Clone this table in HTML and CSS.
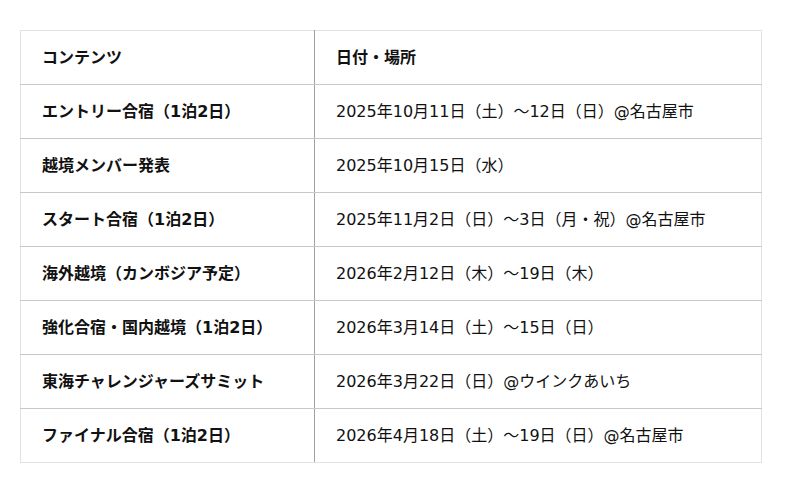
FILE: index.html
```html
<!DOCTYPE html>
<html lang="ja">
<head>
<meta charset="utf-8">
<link rel="stylesheet" href="styles.css">
</head>
<body>
<table class="schedule">
  <colgroup>
    <col class="col-content">
    <col class="col-date">
  </colgroup>
  <thead>
    <tr><th>コンテンツ</th><th class="date-head">日付・場所</th></tr>
  </thead>
  <tbody>
    <tr><th>エントリー合宿（1泊2日）</th><td>2025年10月11日（土）～12日（日）@名古屋市</td></tr>
    <tr><th>越境メンバー発表</th><td>2025年10月15日（水）</td></tr>
    <tr><th>スタート合宿（1泊2日）</th><td>2025年11月2日（日）～3日（月・祝）@名古屋市</td></tr>
    <tr><th>海外越境（カンボジア予定）</th><td>2026年2月12日（木）～19日（木）</td></tr>
    <tr><th>強化合宿・国内越境（1泊2日）</th><td>2026年3月14日（土）～15日（日）</td></tr>
    <tr><th>東海チャレンジャーズサミット</th><td>2026年3月22日（日）@ウインクあいち</td></tr>
    <tr><th>ファイナル合宿（1泊2日）</th><td>2026年4月18日（土）～19日（日）@名古屋市</td></tr>
  </tbody>
</table>
</body>
</html>
```
FILE: styles.css
```css
html, body {
  margin: 0;
  padding: 0;
  background: #ffffff;
}
body {
  padding: 30px 20px;
  font-family: "DejaVu Sans", "Noto Sans CJK JP", sans-serif;
  font-size: 16px;
  color: #111111;
}
.schedule {
  width: 742px;
  border-collapse: collapse;
  table-layout: fixed;
  border: 1px solid #e2e2e2;
}
.col-content {
  width: 294px;
}
.schedule th,
.schedule td {
  height: 54px;
  box-sizing: border-box;
  padding: 0 20px 0 21px;
  text-align: left;
  vertical-align: middle;
  border-bottom: 1px solid #c8c8c8;
  line-height: 22px;
}
.schedule th {
  font-weight: bold;
  border-right: 1px solid #a0a0a0;
}
.schedule td {
  font-weight: normal;
}
.schedule thead th.date-head {
  border-right: none;
}
.schedule tbody tr:last-child th,
.schedule tbody tr:last-child td {
  border-bottom: 1px solid #e2e2e2;
}
```
